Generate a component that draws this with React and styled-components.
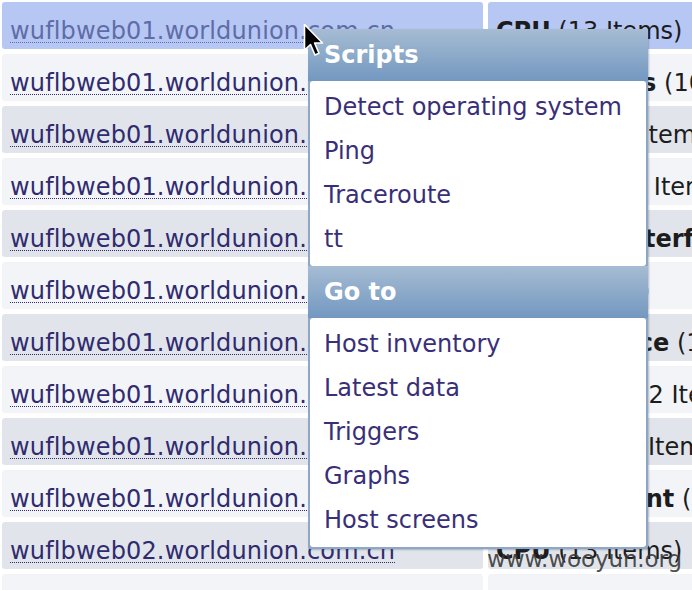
import React from 'react';
import styled, { createGlobalStyle } from 'styled-components';

const Global = createGlobalStyle`
  html, body {
    margin: 0;
    padding: 0;
    background: #ffffff;
  }
  body {
    font-family: "DejaVu Sans", Verdana, sans-serif;
  }
`;

const Page = styled.div`
  position: relative;
  width: 692px;
  height: 590px;
  overflow: hidden;
`;

const Table = styled.div`
  display: grid;
  grid-template-columns: 481px 420px;
  grid-auto-rows: 47px;
  gap: 5px;
  padding: 2px 0 0 2px;
`;

const rowColors = {
  hover: '#b7c7f4',
  light: '#f2f4f8',
  dark: '#e1e5eb',
};

const Cell = styled.div`
  background: ${(p) => rowColors[p.$tone]};
  border-radius: 3px;
  padding: 16px 0 0 8px;
  font-size: 24px;
  line-height: 26px;
  white-space: nowrap;
  overflow: hidden;
  color: #1c1c1c;
`;

const HostLink = styled.span`
  color: ${(p) => (p.$hover ? '#5f6ca8' : '#2f2b6e')};
  letter-spacing: 0.15px;
  text-decoration: underline dotted;
  text-underline-offset: 3px;
  text-decoration-thickness: 1px;
`;

const AppName = styled.b`
  font-weight: bold;
`;

const Menu = styled.div`
  position: absolute;
  left: 308px;
  top: 29px;
  width: 336px;
  padding: 0 2px 2px;
  background: #8ea7c4;
  border-radius: 2px;
  box-shadow: 1px 1px 2px rgba(60, 80, 110, 0.35);
`;

const MenuHeader = styled.div`
  margin: 0 -2px;
  height: 52px;
  line-height: 52px;
  padding-left: 16px;
  font-size: 24px;
  font-weight: bold;
  color: #ffffff;
  background: linear-gradient(#a6bcd3, #7398c0);
`;

const MenuSection = styled.div`
  background: #ffffff;
  border-radius: 3px;
  padding: 4px 0 5px;
`;

const MenuItem = styled.div`
  height: 44px;
  line-height: 44px;
  padding-left: 14px;
  font-size: 24px;
  color: #392f78;
`;

const Watermark = styled.div`
  position: absolute;
  left: 487px;
  top: 546px;
  font-size: 23px;
  line-height: 26px;
  color: rgba(55, 55, 55, 0.9);
  letter-spacing: -0.1px;
  white-space: nowrap;
`;

const Cursor = styled.svg`
  position: absolute;
  left: 303px;
  top: 23px;
`;

const rows = [
  { host: 'wuflbweb01.worldunion.com.cn', app: 'CPU', count: '(13 Items)' },
  { host: 'wuflbweb01.worldunion.com.cn', app: 'Filesystems', count: '(10 Items)' },
  { host: 'wuflbweb01.worldunion.com.cn', app: 'General', count: '(5 Items)' },
  { host: 'wuflbweb01.worldunion.com.cn', app: 'Partition', count: '(1 Item)' },
  { host: 'wuflbweb01.worldunion.com.cn', app: 'Network interfaces', count: '(12 Items)' },
  { host: 'wuflbweb01.worldunion.com.cn', app: 'OS', count: '(8 Items)' },
  { host: 'wuflbweb01.worldunion.com.cn', app: 'Performance', count: '(17 Items)' },
  { host: 'wuflbweb01.worldunion.com.cn', app: 'Processes', count: '(2 Items)' },
  { host: 'wuflbweb01.worldunion.com.cn', app: 'Security', count: '(8 Items)' },
  { host: 'wuflbweb01.worldunion.com.cn', app: 'Zabbix agent', count: '(3 Items)' },
  { host: 'wuflbweb02.worldunion.com.cn', app: 'CPU', count: '(13 Items)' },
  { host: '', app: 'Filesystems', count: '(10 Items)' },
];

const scripts = ['Detect operating system', 'Ping', 'Traceroute', 'tt'];
const gotos = ['Host inventory', 'Latest data', 'Triggers', 'Graphs', 'Host screens'];

const App = () => (
  <Page>
    <Global />
    <Table>
      {rows.map((r, i) => {
        const tone = i === 0 ? 'hover' : i % 2 === 0 ? 'dark' : 'light';
        return (
          <React.Fragment key={i}>
            <Cell $tone={tone}>
              {r.host && <HostLink $hover={i === 0}>{r.host}</HostLink>}
            </Cell>
            <Cell $tone={tone}>
              <AppName>{r.app}</AppName> {r.count}
            </Cell>
          </React.Fragment>
        );
      })}
    </Table>

    <Menu>
      <MenuHeader>Scripts</MenuHeader>
      <MenuSection>
        {scripts.map((s) => <MenuItem key={s}>{s}</MenuItem>)}
      </MenuSection>
      <MenuHeader>Go to</MenuHeader>
      <MenuSection>
        {gotos.map((s) => <MenuItem key={s}>{s}</MenuItem>)}
      </MenuSection>
    </Menu>

    <Watermark>www.wooyun.org</Watermark>

    <Cursor width="24" height="36" viewBox="0 0 24 36">
      <path
        d="M1.5 1.5 L1.5 27 L7.5 21.5 L12 32 L16 30.3 L11.6 20 L19.5 20 Z"
        fill="#000000"
        stroke="#ffffff"
        strokeWidth="1.6"
        strokeLinejoin="round"
      />
    </Cursor>
  </Page>
);

export default App;
